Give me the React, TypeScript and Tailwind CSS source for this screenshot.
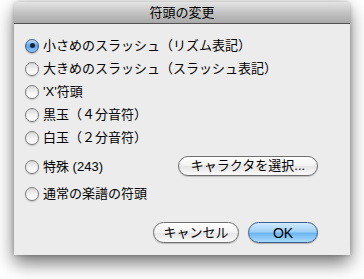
const options = [
  "小さめのスラッシュ（リズム表記）",
  "大きめのスラッシュ（スラッシュ表記）",
  "'X'符頭",
  "黒玉（４分音符）",
  "白玉（２分音符）",
];

function Radio({ on = false }: { on?: boolean }) {
  if (on) {
    return (
      <span className="flex h-[14px] w-[14px] shrink-0 items-center justify-center rounded-full border border-[#3b5f8f] bg-[linear-gradient(180deg,#c6e0fb_0%,#5d9fe4_50%,#8fc3f5_100%)] shadow-[0_1px_1px_rgba(0,0,0,0.25)]">
        <span className="h-[5px] w-[5px] rounded-full bg-[#13233c]" />
      </span>
    );
  }
  return (
    <span className="h-[14px] w-[14px] shrink-0 rounded-full border border-[#7b7b7b] bg-[linear-gradient(180deg,#d9d9d9_0%,#f4f4f4_55%,#ffffff_100%)] shadow-[0_1px_1px_rgba(0,0,0,0.2)]" />
  );
}

function Row({ label, on = false }: { label: string; on?: boolean }) {
  return (
    <div className="flex h-[23px] items-center gap-[4px]">
      <Radio on={on} />
      <span>{label}</span>
    </div>
  );
}

export default function App() {
  return (
    <div
      className="h-[279px] w-[364px] overflow-hidden bg-white pl-[14px] pt-[2px] text-[13px] text-black"
      style={{ fontFamily: '"Liberation Sans", "Noto Sans CJK JP", sans-serif' }}
    >
      <div className="flex h-[253px] w-[336px] flex-col rounded-t-[5px] bg-[#ececec] shadow-[0_8px_18px_rgba(0,0,0,0.55),0_0_4px_rgba(0,0,0,0.25)]">
        <div className="flex h-[22px] items-center justify-center rounded-t-[5px] border-b border-[#515151] bg-[linear-gradient(180deg,#e4e4e4_0%,#c4c4c4_50%,#a9a9a9_100%)] text-[13px] text-black">
          符頭の変更
        </div>
        <div className="flex flex-1 flex-col pl-[11px] pr-[32px] pt-[10px]">
          {options.map((o, i) => (
            <Row key={o} label={o} on={i === 0} />
          ))}
          <div className="mt-[6px] flex h-[23px] items-center">
            <div className="flex items-center gap-[4px]">
              <Radio />
              <span>特殊 (243)</span>
            </div>
            <button className="ml-auto mt-[-2px] h-[20px] w-[140px] rounded-full border border-[#6f6f6f] bg-[linear-gradient(180deg,#ffffff_0%,#f1f1f1_50%,#e4e4e4_51%,#fafafa_100%)] text-[13px] leading-none shadow-[0_1px_1px_rgba(0,0,0,0.2)]">
              キャラクタを選択...
            </button>
          </div>
          <div className="mt-[4px]">
            <Row label="通常の楽譜の符頭" />
          </div>
          <div className="mt-[17px] flex justify-end gap-[9px]">
            <button className="h-[21px] w-[86px] rounded-full border border-[#6f6f6f] bg-[linear-gradient(180deg,#ffffff_0%,#f1f1f1_50%,#e4e4e4_51%,#fafafa_100%)] text-[13px] leading-none shadow-[0_1px_1px_rgba(0,0,0,0.2)]">
              キャンセル
            </button>
            <button className="h-[21px] w-[70px] rounded-full border border-[#3d5d8e] bg-[linear-gradient(180deg,#d2ebfd_0%,#9fd0f7_45%,#6eb6f2_55%,#a6dafa_100%)] text-[14px] leading-none shadow-[0_1px_1px_rgba(0,0,0,0.25)]">
              OK
            </button>
          </div>
        </div>
      </div>
    </div>
  );
}
